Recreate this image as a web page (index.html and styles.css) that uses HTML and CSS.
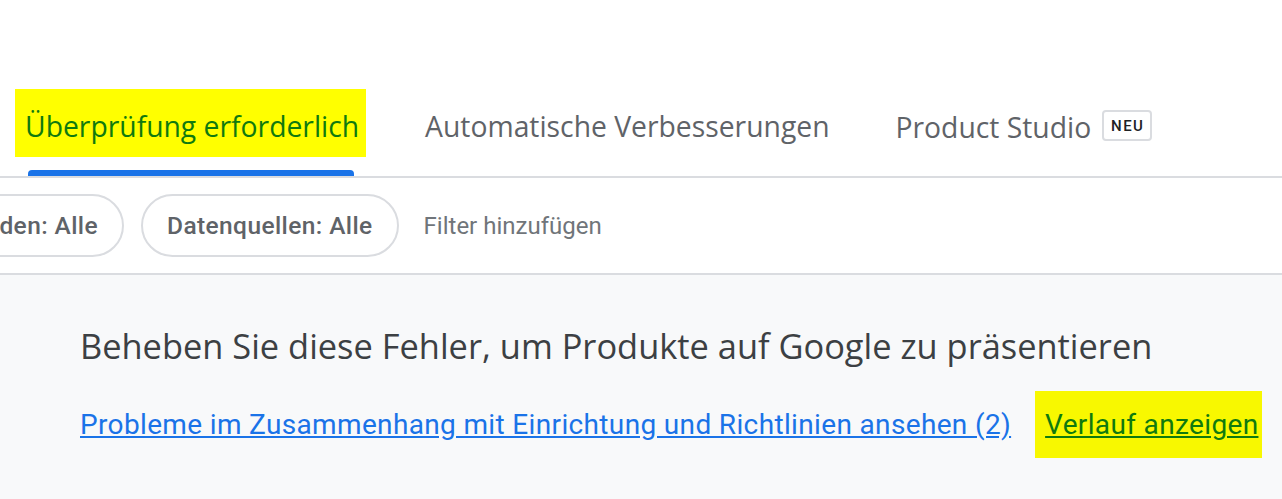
FILE: index.html
```html
<!DOCTYPE html>
<html lang="de">
<head>
<meta charset="utf-8">
<title>Produkte</title>
<link rel="stylesheet" href="styles.css">
</head>
<body>
<div class="top-space"></div>
<nav class="tabs">
  <div class="tab tab-active">
    <span class="tab-label hl-top">Überprüfung erforderlich</span>
    <span class="indicator"></span>
  </div>
  <div class="tab tab-second">
    <span class="tab-label">Automatische Verbesserungen</span>
  </div>
  <div class="tab tab-third">
    <span class="tab-label">Product Studio</span>
    <span class="badge">NEU</span>
  </div>
</nav>
<div class="filters">
  <div class="chip-clip">
    <button class="chip">Marketingmethoden: Alle</button>
  </div>
  <button class="chip chip-second">Datenquellen: Alle</button>
  <span class="add-filter">Filter hinzufügen</span>
</div>
<section class="panel">
  <h1 class="panel-title">Beheben Sie diese Fehler, um Produkte auf Google zu präsentieren</h1>
  <div class="links">
    <a class="link" href="#">Probleme im Zusammenhang mit Einrichtung und Richtlinien ansehen (2)</a>
    <span class="hl-bottom"><a class="link link-green" href="#">Verlauf anzeigen</a></span>
  </div>
</section>
</body>
</html>
```
FILE: styles.css
```css
html, body {
  margin: 0;
  padding: 0;
  background: #ffffff;
  overflow: hidden;
}
body {
  width: 1282px;
  height: 499px;
  font-family: "Open Sans", "Noto Sans", sans-serif;
}
.top-space {
  height: 89px;
}
.tabs {
  display: flex;
  align-items: flex-start;
  height: 87px;
  border-bottom: 2px solid #dadce0;
}
.tab {
  display: flex;
  flex-direction: column;
  flex-shrink: 0;
}
.tab-active {
  margin-left: 15px;
}
.tab-label {
  display: block;
  height: 68px;
  line-height: 75px;
  font-size: 28.3px;
  color: #5f6368;
  white-space: nowrap;
}
.hl-top {
  background: #ffff00;
  color: #0f7a0f;
  padding: 0 7px 0 10px;
}
.indicator {
  display: block;
  height: 6px;
  margin: 13px 12px 0 13px;
  background: #1a73e8;
  border-radius: 4px 4px 0 0;
}
.tab-second {
  margin-left: 59px;
}
.tab-third {
  margin-left: 66px;
  flex-direction: row;
  align-items: center;
  height: 68px;
  padding-top: 7px;
  box-sizing: border-box;
}
.tab-third .tab-label {
  height: auto;
  line-height: 40px;
}
.badge {
  margin-left: 11px;
  margin-top: -2px;
  box-sizing: border-box;
  height: 31px;
  width: 50px;
  border: 2px solid #dadce0;
  border-radius: 4px;
  font-family: Roboto, "Liberation Sans", sans-serif;
  font-weight: 500;
  font-size: 15px;
  letter-spacing: 1.5px;
  color: #202124;
  display: flex;
  align-items: center;
  justify-content: center;
  padding-left: 1px;
}
.filters {
  display: flex;
  align-items: center;
  height: 95px;
  border-bottom: 2px solid #dadce0;
  font-family: Roboto, "Liberation Sans", sans-serif;
}
.chip-clip {
  width: 124px;
  display: flex;
  justify-content: flex-end;
  flex-shrink: 0;
}
.chip {
  flex-shrink: 0;
  box-sizing: border-box;
  height: 63px;
  padding: 0 24px;
  border: 2px solid #dadce0;
  border-radius: 32px;
  background: #ffffff;
  font-family: Roboto, "Liberation Sans", sans-serif;
  font-weight: 500;
  font-size: 24.5px;
  letter-spacing: 0.4px;
  color: #5f6368;
  white-space: nowrap;
}
.chip-second {
  margin-left: 17px;
}
.add-filter {
  margin-left: 25px;
  font-size: 24px;
  color: #70757a;
  white-space: nowrap;
}
.panel {
  background: #f8f9fa;
  height: 224px;
  padding: 0 0 0 80px;
}
.panel-title {
  margin: 0;
  padding-top: 49px;
  font-weight: 400;
  font-size: 34.4px;
  line-height: 44px;
  color: #3c4043;
  white-space: nowrap;
}
.links {
  display: flex;
  align-items: center;
  margin-top: 23px;
  font-family: Roboto, "Liberation Sans", sans-serif;
  font-size: 28px;
  letter-spacing: 0.35px;
}
.link {
  color: #1a73e8;
  text-decoration: underline;
  white-space: nowrap;
}
.hl-bottom {
  display: flex;
  align-items: center;
  height: 67px;
  margin-left: 24px;
  padding: 0 4px 0 10px;
  background: #f8f800;
}
.link-green {
  color: #0f7a0f;
}
```
